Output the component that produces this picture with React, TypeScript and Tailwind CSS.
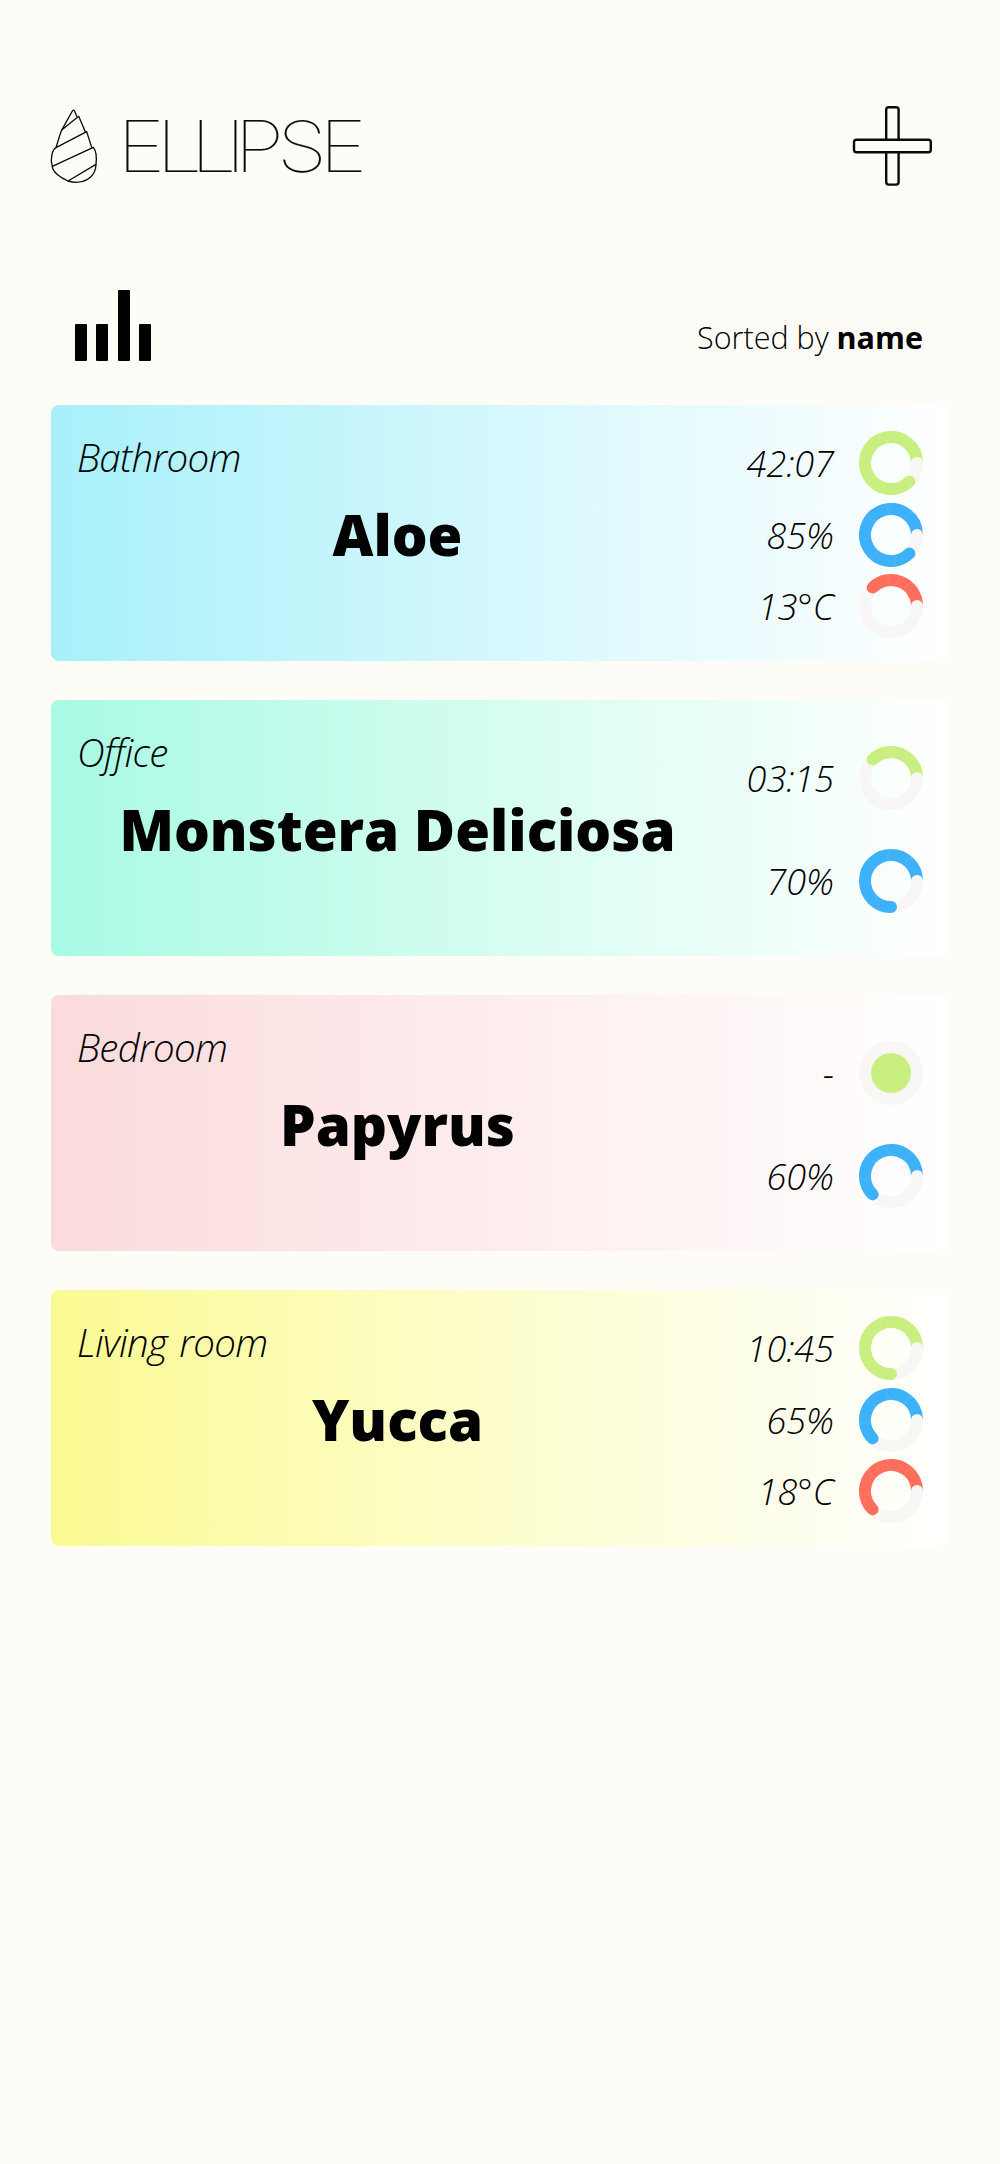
type Gauge = { label: string; color: string; steps: number };
type Plant = { room: string; name: string; gradient: string; gauges: Gauge[] };

const GREEN = "#c8ef80";
const BLUE = "#3db1fa";
const RED = "#ff6f5b";

const plants: Plant[] = [
  {
    room: "Bathroom",
    name: "Aloe",
    gradient: "from-[#a7f0fa]",
    gauges: [
      { label: "42:07", color: GREEN, steps: 7 },
      { label: "85%", color: BLUE, steps: 7 },
      { label: "13°C", color: RED, steps: 3 },
    ],
  },
  {
    room: "Office",
    name: "Monstera Deliciosa",
    gradient: "from-[#a7fae4]",
    gauges: [
      { label: "03:15", color: GREEN, steps: 3 },
      { label: "70%", color: BLUE, steps: 6 },
    ],
  },
  {
    room: "Bedroom",
    name: "Papyrus",
    gradient: "from-[#fbdbdc]",
    gauges: [
      { label: "-", color: GREEN, steps: 0 },
      { label: "60%", color: BLUE, steps: 5 },
    ],
  },
  {
    room: "Living room",
    name: "Yucca",
    gradient: "from-[#fbfa92]",
    gauges: [
      { label: "10:45", color: GREEN, steps: 6 },
      { label: "65%", color: BLUE, steps: 5 },
      { label: "18°C", color: RED, steps: 5 },
    ],
  },
];

// Point on a circle around (32, 32); angles run counter-clockwise from the right.
function point(radius: number, step: number) {
  const a = (step * Math.PI) / 4;
  return `${(32 + radius * Math.cos(a)).toFixed(2)} ${(32 - radius * Math.sin(a)).toFixed(2)}`;
}

function Ring({ color, steps }: { color: string; steps: number }) {
  const track = "#f9f7f6";
  return (
    <svg className="size-16 shrink-0" viewBox="0 0 64 64" fill="none">
      <circle cx="32" cy="32" r="26" stroke={track} strokeWidth="12" />
      {steps === 0 ? (
        <circle cx="32" cy="32" r="20" fill={color} />
      ) : (
        <>
          <path
            d={`M58 32 A26 26 0 ${steps > 4 ? 1 : 0} 0 ${point(26, steps)}`}
            stroke={color}
            strokeWidth="12"
            strokeLinecap="round"
          />
          {Array.from({ length: steps - 1 }, (_, i) => (
            <path
              key={i}
              d={`M${point(31.5, i + 1)} A6 6 0 0 0 ${point(20.5, i + 1)}`}
              stroke="#fff"
              strokeOpacity="0.16"
              strokeWidth="0.6"
            />
          ))}
          <path
            d={`M${point(26, -0.3)} A26 26 0 0 0 58 32`}
            stroke={track}
            strokeWidth="12"
            strokeLinecap="round"
          />
        </>
      )}
    </svg>
  );
}

function Logo() {
  return (
    <svg className="h-[100px] w-[340px]" viewBox="0 0 1020 300" fill="none" stroke="#0a0a0a" strokeWidth="4" strokeLinejoin="round" strokeLinecap="round">
      <path d="M66 104 L97 48 Q101 42 104 49 L110 63 M66 104 L116 64 L136 110" />
      <path d="M66 104 Q63 107 48 158 L140 110 L155 157" />
      <path d="M48 158 C36 165 30 192 37 214 L160 157 C169 168 170 190 168 208 L84 258" />
      <path d="M37 214 C36 230 62 248 84 258 C128 272 168 248 168 208" />
      <text
        x="199.6 300.4 389.2 478.9 503 612.9 722"
        y="230.5"
        transform="scale(1.16 1)"
        fill="#0a0a0a"
        strokeWidth="0.3"
        className="font-['Inter',sans-serif] text-[212px] font-thin"
      >
        ELLIPSE
      </text>
    </svg>
  );
}

function PlantCard({ plant }: { plant: Plant }) {
  return (
    <article className={`flex h-64 rounded-lg bg-linear-to-r ${plant.gradient} to-white`}>
      <div className="w-[693px] pl-[26px] pt-[25px]">
        <p className="text-[38.5px] leading-[54px] font-light tracking-[-0.7px] italic [word-spacing:3px]">{plant.room}</p>
        <h2 className="-ml-[26px] mt-[12px] text-center text-[56.4px] leading-[78px] font-extrabold">{plant.name}</h2>
      </div>
      <div
        className={`flex flex-1 flex-col justify-center pt-[3px] pr-[26px] ${
          plant.gauges.length === 3 ? "gap-[7.7px]" : "gap-[38.5px]"
        }`}
      >
        {plant.gauges.map((g) => (
          <div key={g.label} className="flex items-center justify-end gap-[25px]">
            <span className="pt-[2px] text-[36px] leading-[48px] font-light whitespace-nowrap italic">{g.label}</span>
            <Ring color={g.color} steps={g.steps} />
          </div>
        ))}
      </div>
    </article>
  );
}

export default function App() {
  return (
    <main className="h-[2164px] w-[1000px] bg-[#fdfcf7] font-['Open_Sans',sans-serif] text-black">
      <header className="flex items-start justify-between pt-[95px] pr-[50px] pl-10">
        <Logo />
        <button aria-label="Add plant">
          <svg className="h-[100px] w-[110px]" viewBox="0 0 110 100" fill="#fdfcf7" stroke="#0a0a0a" strokeWidth="2.4">
            <rect x="46.2" y="12.2" width="12.4" height="77.4" rx="2.5" />
            <rect x="14" y="44.7" width="76.8" height="12.6" rx="2.5" />
          </svg>
        </button>
      </header>
      <section className="flex h-[210px] items-end justify-between pr-[77px] pb-[44.5px] pl-[75px]">
        <div className="flex items-end">
          <span className="h-[37px] w-[11.5px] rounded-[1px] bg-black" />
          <span className="ml-[9.5px] h-[37px] w-[11.5px] rounded-[1px] bg-black" />
          <span className="ml-[10.5px] h-[70.5px] w-[11.5px] rounded-[1px] bg-black" />
          <span className="ml-[9.5px] h-[37px] w-[11.5px] rounded-[1px] bg-black" />
        </div>
        <p className="mb-[2.5px] text-[30.5px] leading-[42px] font-light">
          Sorted by <b className="font-bold">name</b>
        </p>
      </section>
      <div className="flex flex-col gap-[39px] px-[51px]">
        {plants.map((p) => (
          <PlantCard key={p.name} plant={p} />
        ))}
      </div>
    </main>
  );
}
